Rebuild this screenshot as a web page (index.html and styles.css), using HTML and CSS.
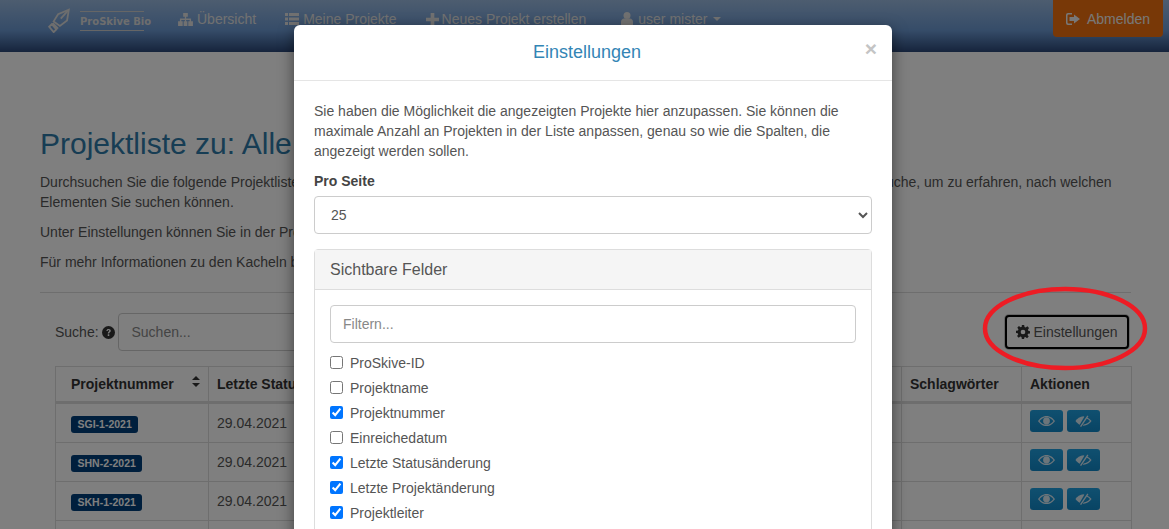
FILE: index.html
```html
<!DOCTYPE html>
<html lang="de">
<head>
  <meta charset="utf-8">
  <title>Projektliste</title>
  <link rel="stylesheet" href="styles.css">
</head>
<body>

<svg class="defs" width="0" height="0">
  <defs>
    <symbol id="i-eye" viewBox="0 0 20 14"><path fill-rule="evenodd" d="M10 1C5.500 1 2 4 0 7c2 3 5.500 6 10 6s8-3 10-6c-2-3-5.500-6-10-6zM10 2.500c3.600 0 6.400 2.200 8.200 4.500-1.800 2.300-4.600 4.500-8.200 4.500S3.600 9.300 1.800 7C3.600 4.700 6.400 2.500 10 2.500zM10 3a4 4 0 1 0 0 8 4 4 0 0 0 0-8z"/></symbol>
    <symbol id="i-eye-off" viewBox="0 0 20 14"><path d="M10 1.500C6 1.500 2.500 4.200 0.500 7c1.200 1.700 3 3.300 5 4.300L11 2z"/><path d="M14.300 3C16.300 4 18 5.500 19.500 7c-2 3-5.500 5.500-9.500 5.500h-.8l.9-1.500c3.300-.1 5.800-2 7.500-4-1-1.100-2.400-2.100-4.200-2.800z"/><path d="M14.500 .6l1.300 .7L7.200 14l-1.300-.7z"/></symbol>
  </defs>
</svg>

<div class="page">
  <nav class="navbar">
    <a class="brand">
      <svg class="brand-icon" viewBox="0 0 26 28" width="24" height="25" fill="none" stroke="currentColor" stroke-width="2">
        <path d="M7 15L12 7L24 2L22 14L14 20z"/>
        <path d="M23 3L15 12"/>
        <path d="M6 17L12 23M2 21L5 18L10 24L7 27z"/>
      </svg>
      <span class="brand-name">ProSkive Bio</span>
    </a>
    <a class="nav-link">
      <svg class="nav-icon" viewBox="0 0 16 14" width="15" height="13"><path d="M5.500 0h5v4H8.700v2H14v3h2v5h-5V9h1.500V7.500H8.700V9H10v5H6V9h1.300V7.500H3.500V9H5v5H0V9h2V6h5.300V4H5.500z"/></svg>
      Übersicht
    </a>
    <a class="nav-link">
      <svg class="nav-icon" viewBox="0 0 14 12" width="14" height="12"><path d="M0 0h3v3H0zM4 0h10v3H4zM0 4.500h3v3H0zM4 4.500h10v3H4zM0 9h3v3H0zM4 9h10v3H4z"/></svg>
      Meine Projekte
    </a>
    <a class="nav-link nav-link-wide">
      <svg class="nav-icon" viewBox="0 0 12 12" width="13" height="13"><path d="M4.300 0h3.400v4.300H12v3.400H7.700V12H4.300V7.700H0V4.300h4.300z"/></svg>
      Neues Projekt erstellen
    </a>
    <a class="nav-link nav-user">
      <svg class="nav-icon" viewBox="0 0 12 14" width="12" height="14"><circle cx="6" cy="3.500" r="3.500"/><path d="M0 14V10c0-2 1.500-3.500 3-3.500h6c1.500 0 3 1.500 3 3.500v4z"/></svg>
      user mister
      <span class="caret"></span>
    </a>
    <a class="btn-logout">
      <svg class="nav-icon" viewBox="0 0 14 12" width="14" height="12"><path fill-rule="evenodd" d="M2 0h4v1.500H2.500a1 1 0 0 0-1 1v7a1 1 0 0 0 1 1H6V12H2a2 2 0 0 1-2-2V2a2 2 0 0 1 2-2z"/><path d="M8 1.500L14 6l-6 4.500V8H3.500V4H8z"/></svg>
      Abmelden
    </a>
  </nav>

  <main class="content">
    <h1 class="title">Projektliste zu: Alle Projekte</h1>
    <p class="intro">Durchsuchen Sie die folgende Projektliste nach den gewünschten Projekten. Nutzen Sie hierfür bitte immer das Hilfesymbol neben der Suche, um zu erfahren, nach welchen Elementen Sie suchen können.</p>
    <p class="intro">Unter Einstellungen können Sie in der Projektliste die angezeigten Spalten auswählen.</p>
    <p class="intro">Für mehr Informationen zu den Kacheln beachten Sie bitte die Übersicht.</p>
    <hr class="rule">

    <div class="toolbar">
      <label class="search-label">Suche:
        <svg class="help" viewBox="0 0 12 12" width="13" height="13"><circle cx="6" cy="6" r="6"/><path d="M4 4.600C4.200 3.300 5 2.700 6.100 2.700c1.200 0 2 .7 2 1.700 0 1.400-1.500 1.400-1.500 2.500H5.300c0-1.700 1.400-1.700 1.400-2.500 0-.4-.3-.6-.7-.6-.4 0-.7.300-.8.900zM5.300 7.700h1.400v1.500H5.300z" fill="#fff"/></svg>
      </label>
      <input class="search-input" type="text" placeholder="Suchen...">
      <button class="btn-settings">
        <svg class="gear" viewBox="0 0 24 24" width="14" height="14"><path fill-rule="evenodd" d="M10 0h4l.6 3.400 2 .8L19.500 2.300l2.800 2.800-2 2.900.8 2L24 10.600v3.900l-3.400.6-.8 2 2 2.800-2.800 2.800-2.900-2-2 .8L13.900 24H10l-.6-3.400-2-.8-2.800 2-2.800-2.800 2-2.900-.8-2L0 13.900V10l3.400-.6.8-2-2-2.800 2.800-2.800 2.900 2 2-.8zM12 8a4 4 0 1 0 0 8 4 4 0 0 0 0-8z"/></svg>
        Einstellungen
      </button>
    </div>

    <table class="projects">
      <colgroup>
        <col class="col-number"><col class="col-status"><col class="col-change"><col class="col-lead"><col class="col-state"><col class="col-tags"><col class="col-actions">
      </colgroup>
      <thead>
        <tr>
          <th><span class="sortable">Projektnummer <span class="sort-arrows"></span></span></th>
          <th>Letzte Statusänderung</th>
          <th>Letzte Projektänderung</th>
          <th>Projektleiter</th>
          <th>Status</th>
          <th>Schlagwörter</th>
          <th>Aktionen</th>
        </tr>
      </thead>
      <tbody>
        <tr>
          <td><span class="badge">SGI-1-2021</span></td>
          <td>29.04.2021</td><td></td><td></td><td></td><td></td>
          <td class="actions">
            <a class="btn-eye"><svg width="17" height="12"><use href="#i-eye"/></svg></a>
            <a class="btn-eye"><svg width="17" height="12"><use href="#i-eye-off"/></svg></a>
          </td>
        </tr>
        <tr>
          <td><span class="badge">SHN-2-2021</span></td>
          <td>29.04.2021</td><td></td><td></td><td></td><td></td>
          <td class="actions">
            <a class="btn-eye"><svg width="17" height="12"><use href="#i-eye"/></svg></a>
            <a class="btn-eye"><svg width="17" height="12"><use href="#i-eye-off"/></svg></a>
          </td>
        </tr>
        <tr>
          <td><span class="badge">SKH-1-2021</span></td>
          <td>29.04.2021</td><td></td><td></td><td></td><td></td>
          <td class="actions">
            <a class="btn-eye"><svg width="17" height="12"><use href="#i-eye"/></svg></a>
            <a class="btn-eye"><svg width="17" height="12"><use href="#i-eye-off"/></svg></a>
          </td>
        </tr>
        <tr>
          <td></td><td></td><td></td><td></td><td></td><td></td><td></td>
        </tr>
      </tbody>
    </table>
  </main>
</div>

<div class="backdrop"></div>

<div class="modal">
  <header class="modal-head">
    <h4 class="modal-title">Einstellungen</h4>
    <span class="modal-close">×</span>
  </header>
  <div class="modal-body">
    <p class="modal-text">Sie haben die Möglichkeit die angezeigten Projekte hier anzupassen. Sie können die maximale Anzahl an Projekten in der Liste anpassen, genau so wie die Spalten, die angezeigt werden sollen.</p>
    <label class="field-label">Pro Seite</label>
    <select class="per-page">
      <option>25</option>
      <option>50</option>
      <option>100</option>
    </select>
    <section class="panel">
      <div class="panel-head">Sichtbare Felder</div>
      <div class="panel-body">
        <input class="filter" type="text" placeholder="Filtern...">
        <label class="check"><input type="checkbox"> ProSkive-ID</label>
        <label class="check"><input type="checkbox"> Projektname</label>
        <label class="check"><input type="checkbox" checked> Projektnummer</label>
        <label class="check"><input type="checkbox"> Einreichedatum</label>
        <label class="check"><input type="checkbox" checked> Letzte Statusänderung</label>
        <label class="check"><input type="checkbox" checked> Letzte Projektänderung</label>
        <label class="check"><input type="checkbox" checked> Projektleiter</label>
      </div>
    </section>
  </div>
</div>

<!-- rote Markierung um den Button -->
<svg class="marker" viewBox="0 0 170 90" width="170" height="90" fill="none">
  <ellipse cx="85" cy="45.500" rx="80" ry="39.500" stroke="#ed1c24" stroke-width="4.500"/>
</svg>

</body>
</html>
```

FILE: styles.css
```css
html, body {
  margin: 0;
  height: 529px;
  overflow: hidden;
}

body {
  font-family: "Liberation Sans", Arial, sans-serif;
  font-size: 14px;
  line-height: 20px;
  color: #555;
  background-color: #fff;
}

.defs {
  position: absolute;
}

/* navbar */
.navbar {
  height: 52px;
  display: flex;
  align-items: flex-start;
  padding-left: 47px;
  background: linear-gradient(to bottom, #9abae0 0%, #6c99d2 58%, #2c4878 100%);
}

.brand {
  display: flex;
  align-items: center;
  gap: 9px;
  height: 41px;
  margin-right: 34px;
  color: #dcdcdc;
}

.brand-name {
  width: 64px;
  border-top: 1px solid #ccc;
  border-bottom: 1px solid #ccc;
  padding: 3px 0 2px;
  font-family: "DejaVu Sans", sans-serif;
  font-weight: bold;
  font-size: 10px;
  line-height: 13px;
  white-space: nowrap;
}

.nav-link {
  display: flex;
  align-items: center;
  gap: 4px;
  height: 38px;
  margin-right: 29px;
  white-space: nowrap;
  color: #e2e2e2;
}

.nav-link-wide {
  gap: 3px;
  margin-right: 35px;
}

.nav-user {
  gap: 5px;
}

.nav-icon {
  fill: currentColor;
}

.caret {
  width: 0;
  height: 0;
  border-top: 4px solid currentColor;
  border-left: 4px solid transparent;
  border-right: 4px solid transparent;
}

.btn-logout {
  margin-left: auto;
  margin-right: 6px;
  width: 110px;
  height: 37px;
  display: flex;
  align-items: center;
  justify-content: center;
  gap: 7px;
  border-radius: 0 0 4px 4px;
  background-color: #f0700f;
  color: #f0f0f0;
}

/* page content */
.content {
  padding: 74px 38px 0 40px;
}

.title {
  margin: 0 0 10px;
  font-size: 30px;
  line-height: 36px;
  font-weight: normal;
  color: #2f7aa8;
}

.intro {
  margin: 0 0 10px;
  line-height: 20px;
  color: #555;
}

.rule {
  margin: 20px 0 0;
  border: 0;
  border-top: 1px solid #ddd;
}

.toolbar {
  display: flex;
  align-items: center;
  margin-top: 20px;
  padding: 0 0 0 15px;
}

.search-label {
  margin-right: 3px;
  color: #555;
}

.help {
  fill: #333;
  vertical-align: -2px;
}

.search-input {
  width: 400px;
  height: 38px;
  box-sizing: border-box;
  padding: 0 12px;
  border: 1px solid #ccc;
  border-radius: 4px;
  font: inherit;
}

.search-input::placeholder,
.filter::placeholder {
  color: #888;
}

.btn-settings {
  margin-left: auto;
  margin-right: 2px;
  width: 124px;
  height: 34px;
  display: flex;
  align-items: center;
  justify-content: center;
  gap: 3px;
  box-sizing: border-box;
  padding: 0;
  background: #fff;
  border: 2px solid #000;
  border-radius: 4px;
  box-shadow: 0 0 0 1px #ccc;
  font: inherit;
  color: #555;
}

.gear {
  fill: #333;
}

/* table */
.projects {
  margin: 15px 0 0 15px;
  width: 1076px;
  table-layout: fixed;
  border-collapse: collapse;
}

.col-number { width: 153px; }
.col-status { width: 170px; }
.col-change { width: 170px; }
.col-lead { width: 170px; }
.col-state { width: 183px; }
.col-tags { width: 120px; }
.col-actions { width: 110px; }

.projects th,
.projects td {
  border: 1px solid #ddd;
  padding: 0 8px;
  text-align: left;
  white-space: nowrap;
}

.projects th {
  height: 34px;
  border-bottom: 3px solid #ddd;
  color: #333;
}

.projects th:first-child {
  padding: 0 8px 0 15px;
}

.projects td {
  height: 38px;
  color: #555;
}

.projects td:first-child {
  padding-left: 15px;
}

.sortable {
  display: flex;
  align-items: center;
  justify-content: space-between;
}

.sort-arrows {
  width: 0;
  height: 11px;
  border-left: 4px solid transparent;
  border-right: 4px solid transparent;
  position: relative;
  top: -3px;
}

.sort-arrows::before,
.sort-arrows::after {
  content: "";
  position: absolute;
  left: -4px;
  border-left: 4px solid transparent;
  border-right: 4px solid transparent;
}

.sort-arrows::before {
  top: 0;
  border-bottom: 4px solid #333;
}

.sort-arrows::after {
  bottom: 0;
  border-top: 4px solid #333;
}

.badge {
  display: inline-block;
  padding: 0 6.500px;
  border-radius: 3px;
  background-color: #003f7a;
  color: #fff;
  font-size: 10.500px;
  line-height: 17px;
  font-weight: bold;
  vertical-align: middle;
}

.actions {
  font-size: 0;
}

.btn-eye {
  display: inline-flex;
  align-items: center;
  justify-content: center;
  width: 33px;
  height: 22px;
  margin-right: 4px;
  border-radius: 3px;
  background: linear-gradient(to bottom, #20a0e0, #1188c8);
  fill: #d8eaf5;
}

/* modal */
.backdrop {
  position: absolute;
  inset: 0;
  background-color: rgba(0, 0, 0, 0.5);
}

.modal {
  position: absolute;
  top: 25px;
  left: 294px;
  width: 598px;
  height: 600px;
  border-radius: 6px;
  background-color: #fff;
  box-shadow: 0 5px 15px rgba(0, 0, 0, 0.5);
}

.modal-head {
  height: 56px;
  box-sizing: border-box;
  display: flex;
  align-items: center;
  justify-content: center;
  padding-right: 12px;
  border-bottom: 1px solid #e5e5e5;
  position: relative;
}

.modal-title {
  margin: 0 0 2px;
  font-size: 18px;
  font-weight: normal;
  color: #3385b5;
}

.modal-close {
  position: absolute;
  right: 15px;
  top: 14px;
  font-size: 21px;
  font-weight: bold;
  color: #c4c4c4;
}

.modal-body {
  padding: 20px;
}

.modal-text {
  margin: 0 0 10px;
}

.field-label {
  display: block;
  margin-bottom: 5px;
  font-weight: bold;
  color: #444;
}

.per-page {
  display: block;
  width: 100%;
  height: 38px;
  padding: 0 12px;
  border: 1px solid #ccc;
  border-radius: 4px;
  background-color: #fff;
  font: inherit;
  color: #555;
}

.panel {
  margin-top: 15px;
  border: 1px solid #ddd;
  border-radius: 4px;
}

.panel-head {
  height: 39px;
  display: flex;
  align-items: center;
  padding: 0 15px;
  background-color: #f5f5f5;
  border-bottom: 1px solid #ddd;
  font-size: 16px;
  color: #555;
}

.panel-body {
  padding: 15px;
}

.filter {
  display: block;
  width: 100%;
  height: 38px;
  box-sizing: border-box;
  margin-bottom: 7px;
  padding: 0 12px;
  border: 1px solid #ccc;
  border-radius: 4px;
  font: inherit;
}

.check {
  display: flex;
  align-items: center;
  gap: 7px;
  height: 25px;
  color: #555;
}

.check input {
  width: 13px;
  height: 13px;
  margin: 0;
}

/* annotation */
.marker {
  position: absolute;
  left: 980px;
  top: 283px;
}
```
